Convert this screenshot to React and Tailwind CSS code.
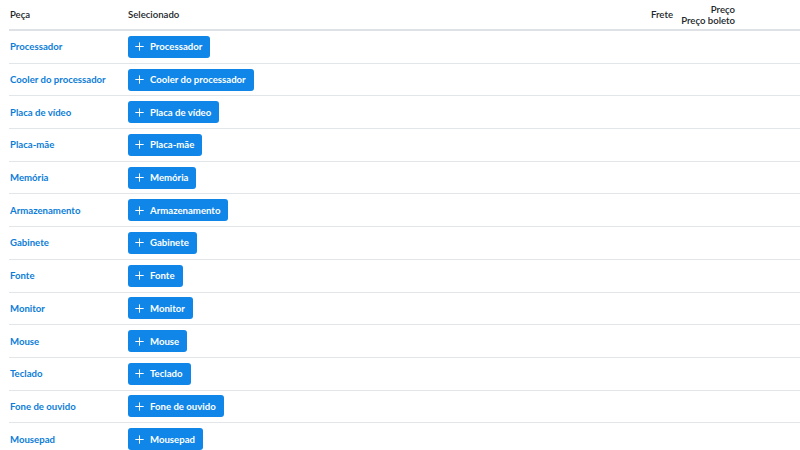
import { Plus } from 'lucide-react';

const parts = [
  'Processador',
  'Cooler do processador',
  'Placa de vídeo',
  'Placa-mãe',
  'Memória',
  'Armazenamento',
  'Gabinete',
  'Fonte',
  'Monitor',
  'Mouse',
  'Teclado',
  'Fone de ouvido',
  'Mousepad',
];

const cols = 'grid grid-cols-[119px_1fr_60px_62px_65px] items-center';

const App = () => {
  return (
    <div className="h-[450px] w-[800px] overflow-hidden bg-white pl-[9px] font-['Lato',sans-serif] text-[9.6px] leading-[11px] text-[#212529]">
      <div className={`${cols} h-[31px] border-b-2 border-[#dee2e6] font-semibold`}>
        <span className="pl-px">Peça</span>
        <span>Selecionado</span>
        <span className="text-right">Frete</span>
        <span className="flex flex-col items-end">
          <span className="leading-[11px]">Preço</span>
          <span className="whitespace-nowrap leading-[11px]">Preço boleto</span>
        </span>
        <span />
      </div>

      {parts.map((part) => (
        <div key={part} className={`${cols} h-[32.7px] border-b border-[#e3e6e9]`}>
          <a href="#" className="pl-px font-bold text-[#0b7dd8]">
            {part}
          </a>
          <div>
            <button
              type="button"
              className="inline-flex h-[22px] items-center gap-[4px] rounded-[3px] bg-[#0f86e8] pl-[5px] pr-[8px] font-bold text-white"
            >
              <Plus size={13} strokeWidth={1.9} />
              {part}
            </button>
          </div>
          <span />
          <span />
          <span />
        </div>
      ))}
    </div>
  );
};

export default App;
